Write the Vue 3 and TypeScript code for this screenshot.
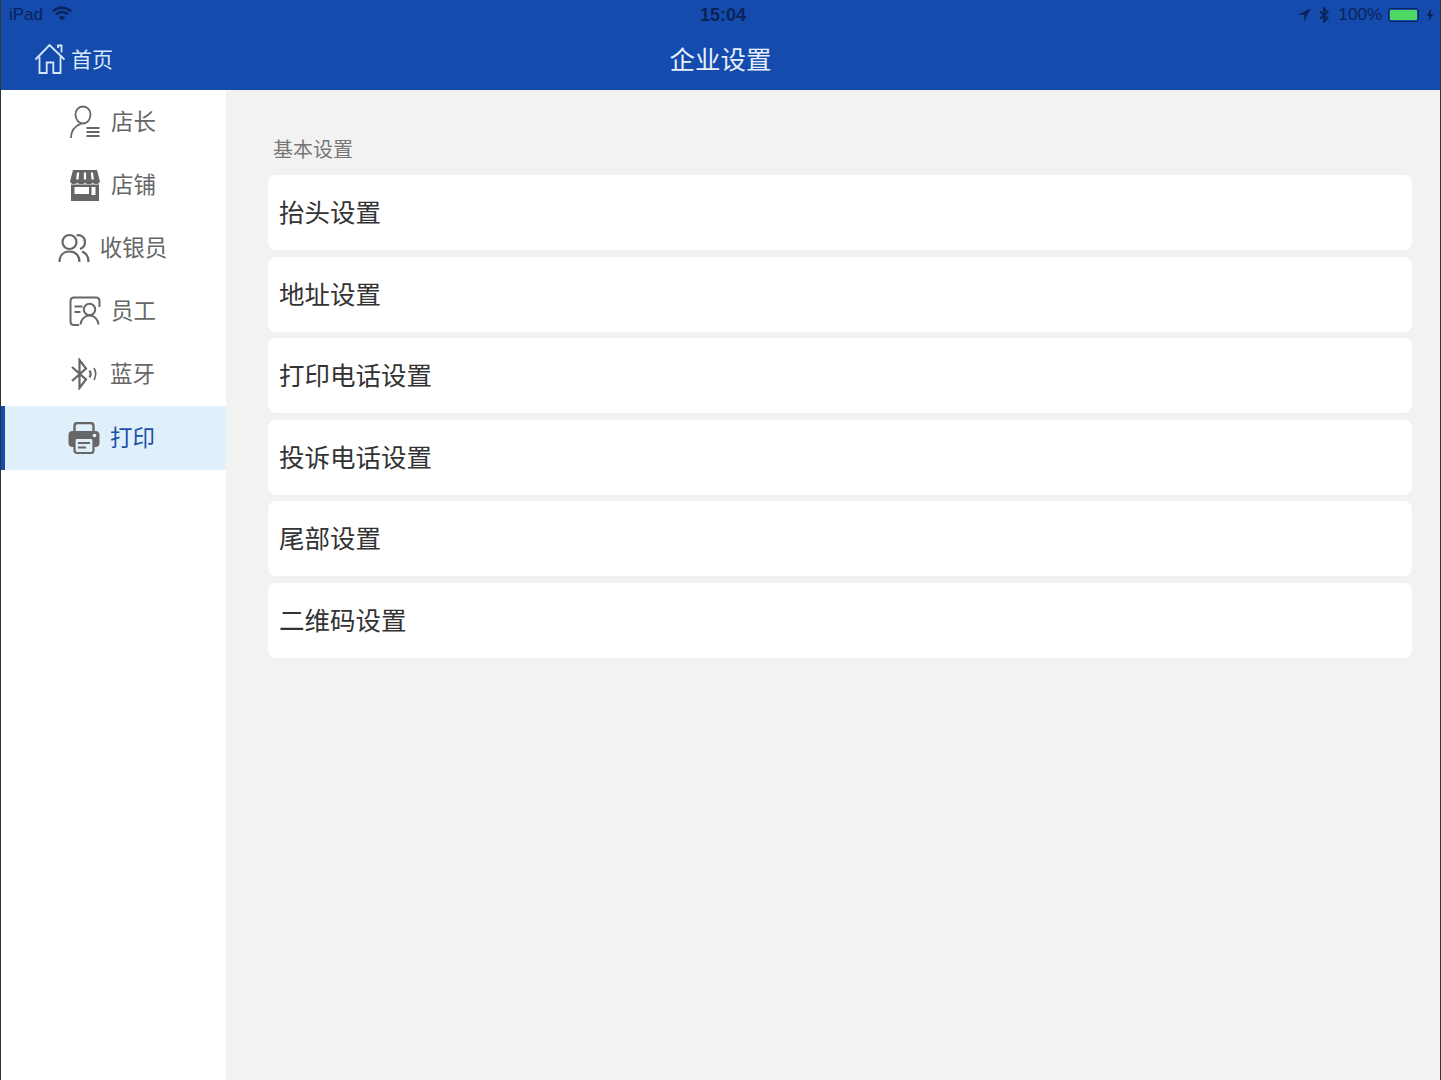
<script setup lang="ts">
const navItems = [
  { key: 'owner', label: '店长' },
  { key: 'shop', label: '店铺' },
  { key: 'cashier', label: '收银员' },
  { key: 'staff', label: '员工' },
  { key: 'bluetooth', label: '蓝牙' },
  { key: 'print', label: '打印' }
]

const settings = ['抬头设置', '地址设置', '打印电话设置', '投诉电话设置', '尾部设置', '二维码设置']
</script>

<template>
  <div class="page">
    <header class="top">
      <div class="status">
        <div class="status-left">
          <span>iPad</span>
          <svg class="wifi" width="20" height="15" viewBox="0 0 20 15">
            <path d="M1 5.200C6 .6 14 .6 19 5.200" fill="none" stroke="#0b2358" stroke-width="2.600" />
            <path d="M4.200 8.200c3.300-3 8.300-3 11.600 0" fill="none" stroke="#0b2358" stroke-width="2.600" />
            <path d="M6.800 11c1.800-1.500 4.600-1.500 6.400 0L10 14.500z" fill="#0b2358" />
          </svg>
        </div>
        <span class="clock">15:04</span>
        <div class="status-right">
          <svg class="arrow" width="14" height="14" viewBox="0 0 14 14"><path d="M13.500.5 .5 6.800h6.700v6.700z" fill="#0b2358" /></svg>
          <svg class="bt" width="10" height="16" viewBox="0 0 10 16">
            <path d="M1 4.400 8.600 11 5 14.600V1.400L8.600 5 1 11.600" fill="none" stroke="#0b2358" stroke-width="1.900" />
          </svg>
          <span class="pct">100%</span>
          <span class="battery"><i></i></span>
          <svg class="bolt" width="8" height="14" viewBox="0 0 8 13"><path d="M5.400 0 .6 7.200h2.800L2.400 13l5-7.600H4.400z" fill="#0b2358" /></svg>
        </div>
      </div>
      <div class="title-bar">
        <div class="back">
          <svg width="32" height="34" viewBox="0 0 32 34" fill="none" stroke="#d6e8fb" stroke-width="1.800">
            <path d="M1.500 17.500 15.500 3l15 14.500" />
            <path d="M24 6V3.500h3.500v7" />
            <path d="M5.500 14.500V31h7.200V20.500h6.600V31h7.200V14.500" />
          </svg>
          <span>首页</span>
        </div>
        <h1>企业设置</h1>
      </div>
    </header>

    <div class="body">
      <aside class="side">
        <div v-for="item in navItems" :key="item.key" class="nav-row" :class="{ active: item.key === 'print' }">
          <svg v-if="item.key === 'owner'" width="32" height="34" viewBox="0 0 32 34" fill="none" stroke="#666" stroke-width="1.800">
            <path d="M14 1.500c4.500 0 7.500 3.500 7.500 8s-3 9-7.500 9-7.500-4.500-7.500-9 3-8 7.500-8z" />
            <path d="M2 33c0-7 4-12 10-14.400" />
            <path d="M17.500 23h13M17.500 27h13M17.500 31h13" />
          </svg>
          <svg v-else-if="item.key === 'shop'" width="32" height="32" viewBox="0 0 32 32">
            <path d="M4 1h24l3 11.500c-1 2.800-4.500 3.400-7.500 1.500-2.200 1.800-5 1.800-7.500 0-2.500 1.800-5.300 1.800-7.500 0-3 1.900-6.500 1.300-7.500-1.500z" fill="#666" />
            <path d="M8 3.500h2.200L9.500 10.500H7.200zM14.900 3.500h2.200v7h-2.200zM21.800 3.500H24l.8 7h-2.300z" fill="#fff" />
            <path d="M2 15.500h28V32H2z" fill="#666" />
            <path d="M5.500 18h14.500v7H5.500zM22.500 18h4v8h-4z" fill="#fff" />
          </svg>
          <svg v-else-if="item.key === 'cashier'" width="32" height="30" viewBox="0 0 32 30" fill="none" stroke="#666" stroke-width="2.200">
            <circle cx="11.500" cy="9" r="7" />
            <path d="M1.500 29c0-6 3.500-10.500 10-10.500S21.500 23 21.500 29" />
            <path d="M18.500 2.500c4.500-1.500 8.500 2 8.500 6.500 0 3.500-2 6-5 7" />
            <path d="M24 18.500c4 1.500 6.500 5.500 6.500 10.500" />
          </svg>
          <svg v-else-if="item.key === 'staff'" width="32" height="30" viewBox="0 0 32 30" fill="none" stroke="#666" stroke-width="2">
            <path d="M10 29H5c-2 0-3.500-1.500-3.500-3.500v-20C1.500 3 3 1.500 5 1.500h22c2 0 3.500 1.500 3.500 3.500v6" />
            <path d="M5.500 10.500h8M5.500 16h6" />
            <circle cx="20.500" cy="13.500" r="5.700" />
            <path d="M11.500 28.500c.5-5 4-9 9-9s8.500 4 9 9" />
          </svg>
          <svg v-else-if="item.key === 'bluetooth'" width="30" height="32" viewBox="0 0 30 32" fill="none" stroke="#666" stroke-width="2.200">
            <path d="M2 9 16 21.500 9.500 30V2L16 10.500 2 23" />
            <path d="M19.500 12.500c1.300 2 1.300 5 0 7" />
            <path d="M24 10c2 3.500 2 8.500 0 12" stroke-width="1.600" />
          </svg>
          <svg v-else width="32" height="32" viewBox="0 0 32 32">
            <path d="M6.500 10V4c0-2 1.500-3 3-3h13c1.500 0 3 1 3 3v6" fill="none" stroke="#666" stroke-width="2.400" />
            <rect x="0.500" y="9" width="31" height="16" rx="4" fill="#666" />
            <circle cx="26.500" cy="13.500" r="1.800" fill="#dff0fb" />
            <rect x="6.500" y="16" width="19" height="15" rx="2.500" fill="#dff0fb" stroke="#666" stroke-width="2.200" />
            <path d="M10 21h12M10 25.500h8" stroke="#666" stroke-width="2" />
          </svg>
          <span>{{ item.label }}</span>
        </div>
      </aside>

      <main class="content">
        <p class="group-title">基本设置</p>
        <div class="list">
          <div v-for="name in settings" :key="name" class="card">{{ name }}</div>
        </div>
      </main>
    </div>
  </div>
</template>

<style>
html,
body {
  margin: 0;
  background: #fff;
}
</style>

<style scoped>
.page {
  width: 1441px;
  height: 1080px;
  box-sizing: border-box;
  display: flex;
  flex-direction: column;
  overflow: hidden;
  border-left: 1px solid #333;
  border-right: 1px solid #333;
  font-family: "Noto Sans CJK SC", "Liberation Sans", sans-serif;
}

.top {
  height: 90px;
  flex: none;
  background: #144bad;
}

.status {
  height: 30px;
  padding: 0 6px 0 8px;
  display: flex;
  align-items: center;
  position: relative;
  color: #0b2358;
  font-family: "Liberation Sans", sans-serif;
  font-size: 17px;
}

.status-left {
  display: flex;
  align-items: center;
  gap: 9px;
  margin-top: -1px;
}

.wifi {
  margin-top: -3px;
}

.clock {
  position: absolute;
  left: 699px;
  top: 5px;
  font-size: 18px;
  font-weight: 700;
}

.status-right {
  margin-left: auto;
  display: flex;
  align-items: center;
}

.arrow {
  margin-right: 8px;
}

.bt {
  margin-right: 10px;
}

.battery {
  width: 31px;
  height: 14px;
  margin: 0 7px 0 6px;
  box-sizing: border-box;
  padding: 1px;
  border: 1px solid #0b2358;
  border-radius: 3px;
  display: block;
}

.battery i {
  display: block;
  height: 100%;
  background: #4fd964;
  border-radius: 1px;
}

.title-bar {
  height: 60px;
  position: relative;
  display: flex;
  align-items: center;
  justify-content: center;
}

.title-bar h1 {
  margin: 0 0 4px;
  color: #e6f0fb;
  font-size: 25.500px;
  font-weight: 400;
  line-height: 1;
}

.back {
  position: absolute;
  left: 33px;
  top: 12px;
  display: flex;
  align-items: center;
  gap: 5px;
  color: #d6e8fb;
  font-size: 21px;
}

.back span {
  margin-bottom: 3px;
}

.body {
  flex: 1;
  display: flex;
  min-height: 0;
}

.side {
  width: 225px;
  flex: none;
  background: #fff;
}

.nav-row {
  height: 63.200px;
  display: flex;
  align-items: center;
  justify-content: center;
  gap: 10px;
  color: #666;
  font-size: 22.500px;
  padding: 0 2px 0 0;
  box-sizing: border-box;
}

.nav-row span {
  margin-bottom: 4px;
}

.nav-row.active {
  height: 64px;
  background: #dff0fb;
  border-left: 4px solid #144bad;
  padding: 0 8px 0 0;
  color: #1d50a8;
}

.content {
  flex: 1;
  min-width: 0;
  background: #f2f2f2;
  padding: 45px 28px 0 41px;
}

.group-title {
  margin: 0 0 12px 6px;
  color: #777;
  font-size: 20px;
  line-height: 28px;
}

.list {
  display: flex;
  flex-direction: column;
  gap: 6.500px;
}

.card {
  height: 75px;
  box-sizing: border-box;
  margin-left: 1px;
  padding: 0 0 4px 11px;
  display: flex;
  align-items: center;
  background: #fff;
  border-radius: 8px;
  color: #333;
  font-size: 25.500px;
}
</style>
